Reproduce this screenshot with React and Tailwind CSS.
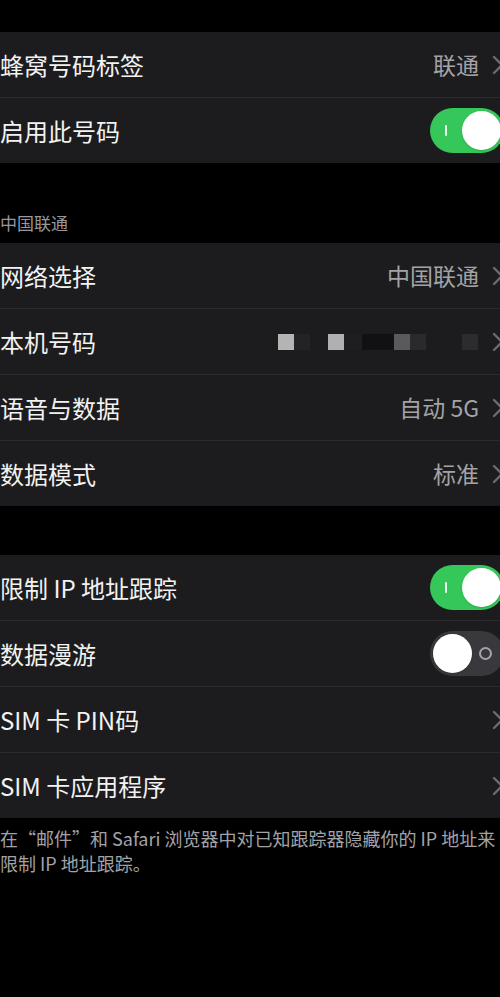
const font = { fontFamily: '"Noto Sans CJK SC", "Noto Sans", sans-serif' };

const Chevron = () => (
  <svg width="12" height="20" viewBox="0 0 12 20" className="shrink-0">
    <path d="M2 2 L10 10 L2 18" fill="none" stroke="#6b6b6f" strokeWidth="2.4" strokeLinecap="round" strokeLinejoin="round" />
  </svg>
);

const Toggle = ({ on }) =>
  on ? (
    <div className="relative w-[74px] h-[45px] rounded-full bg-[#35c759] shrink-0">
      <div className="absolute left-[15px] top-[17px] w-[2px] h-[11px] bg-white/90 rounded" />
      <div className="absolute right-[3px] top-[3px] w-[39px] h-[39px] rounded-full bg-white shadow" />
    </div>
  ) : (
    <div className="relative w-[74px] h-[45px] rounded-full bg-[#39393d] shrink-0">
      <div className="absolute left-[3px] top-[3px] w-[39px] h-[39px] rounded-full bg-white shadow" />
      <div className="absolute right-[12px] top-[16px] w-[13px] h-[13px] rounded-full border-2 border-[#a5a5aa]" />
    </div>
  );

const Blurred = () => (
  <div className="flex items-center mr-[14px]">
    <div className="w-[16px] h-[16px] bg-[#b4b4b4]" />
    <div className="w-[16px] h-[16px] bg-[#232325]" />
    <div className="w-[18px] h-[16px]" />
    <div className="w-[16px] h-[16px] bg-[#b0b0b0]" />
    <div className="w-[18px] h-[16px] bg-[#1e1e20]" />
    <div className="w-[32px] h-[16px] bg-[#111113]" />
    <div className="w-[16px] h-[16px] bg-[#5a5a5c]" />
    <div className="w-[16px] h-[16px] bg-[#2a2a2c]" />
    <div className="w-[36px] h-[16px]" />
    <div className="w-[16px] h-[16px] bg-[#2c2c2e]" />
  </div>
);

const Row = ({ label, value, toggle, blurred, last }) => (
  <div className={`flex items-center ${last ? 'h-[65px]' : 'h-[66px] border-b border-[#2b2b2d]'}`}>
    <span className="text-[24px] text-[#f2f2f2] flex-1 whitespace-nowrap">{label}</span>
    {toggle !== undefined ? (
      <Toggle on={toggle} />
    ) : (
      <div className="flex items-center">
        {blurred && <Blurred />}
        {value && <span className="text-[23px] text-[#a3a3a6] mr-[13px]">{value}</span>}
        <Chevron />
      </div>
    )}
  </div>
);

export default function App() {
  return (
    <div className="w-[500px] h-[997px] bg-black overflow-hidden" style={font}>
      <div className="w-[504px]">
        <div className="h-[32px]" />
        <div className="bg-[#1c1c1e]">
          <Row label="蜂窝号码标签" value="联通" />
          <Row label="启用此号码" toggle={true} last />
        </div>

        <div className="h-[80px] flex items-end pb-[8px]">
          <span className="text-[17px] text-[#98989c]">中国联通</span>
        </div>

        <div className="bg-[#1c1c1e]">
          <Row label="网络选择" value="中国联通" />
          <Row label="本机号码" blurred />
          <Row label="语音与数据" value="自动 5G" />
          <Row label="数据模式" value="标准" last />
        </div>

        <div className="h-[49px]" />

        <div className="bg-[#1c1c1e]">
          <Row label="限制 IP 地址跟踪" toggle={true} />
          <Row label="数据漫游" toggle={false} />
          <Row label="SIM 卡 PIN码" />
          <Row label="SIM 卡应用程序" last />
        </div>

        <div className="pt-[8px] text-[18px] leading-[25px] text-[#a3a3a6] whitespace-nowrap">
          <div>在“邮件”和 Safari 浏览器中对已知跟踪器隐藏你的 IP 地址来</div>
          <div>限制 IP 地址跟踪。</div>
        </div>
      </div>
    </div>
  );
}
